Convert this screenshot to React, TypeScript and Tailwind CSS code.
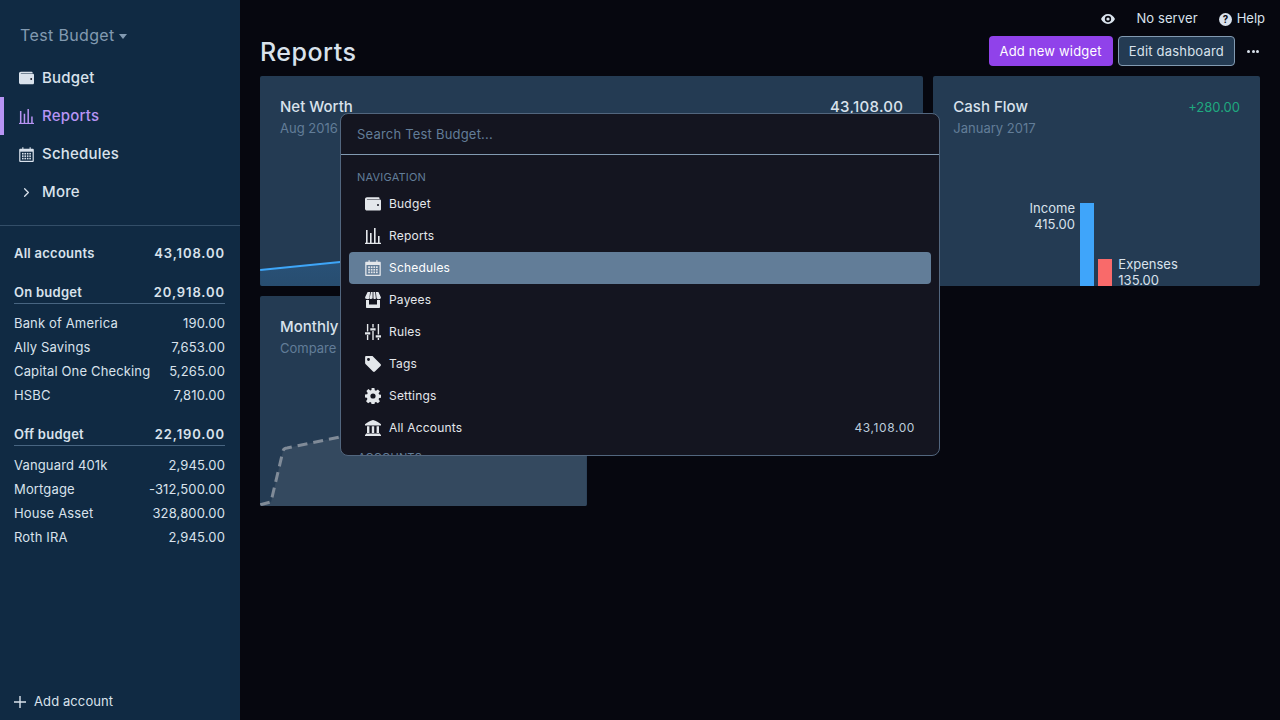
import React from "react";
import { ChevronRight } from "lucide-react";

type IconProps = { className?: string };

const WalletIcon = ({ className }: IconProps) => (
	<svg viewBox="0 0 16 14" className={className} fill="currentColor">
		<path d="M2 .2h11.600c.5 0 .9.3.9.8v1H2.200c-.5 0-.5.4 0 .4H14.600c.8 0 1.400.5 1.400 1.200v8.600c0 .8-.6 1.400-1.400 1.400H2c-1.100 0-2-.8-2-1.900V2.100C0 1 .9.200 2 .200z" />
		<circle cx="13" cy="8" r="1" fill="#14151f" />
	</svg>
);

const ChartIcon = ({ className }: IconProps) => (
	<svg viewBox="0 0 16 16" className={className} fill="currentColor">
		<path d="M0 14.800h16V16H0z" />
		<path d="M1 2h1.600v13H1zM5 5h1.600v10H5zM9 0h1.600v15H9zM13 8h1.600v7H13z" />
	</svg>
);

const CalendarIcon = ({ className, hole }: IconProps & { hole: string }) => (
	<svg viewBox="0 0 16 16" className={className} fill="currentColor">
		<path d="M1.200 1.800H3.500V.2h1.200v1.600h6.600V.2h1.200v1.600h2.300c.6 0 1 .4 1 1V15c0 .6-.4 1-1 1H1.200c-.6 0-1-.4-1-1V2.800c0-.6.4-1 1-1z" />
		<rect x="1.500" y="5" width="13" height="9.700" fill={hole} />
		{[6.300, 8.900, 11.500].map((y) =>
			[3.200, 5.800, 8.400, 11].map((x) => (
				<rect key={`${x}-${y}`} x={x} y={y} width="1.700" height="1.700" fill="currentColor" />
			)),
		)}
	</svg>
);

const StoreIcon = ({ className }: IconProps) => (
	<svg viewBox="0 0 16 16" className={className} fill="currentColor">
		<path d="M2.600 0h2.500l-.7 6.300C3.600 7.500 1 7.500.3 6.300c-.3-.4-.3-.8-.1-1.200zM5.900 0h1.700v6.300c-.5 1-2.500 1-3 .1zM8.400 0h1.700l.8 6.400c-.5.900-2.500.9-2.500-.1zM10.900 0h2.500l2.400 5.100c.2.400.2.800-.1 1.200-.7 1.200-3.300 1.200-4.100 0z" />
		<path fillRule="evenodd" d="M1 8h14v7c0 .6-.4 1-1 1H2c-.6 0-1-.4-1-1zM4 8v4.500h8V8z" />
	</svg>
);

const SlidersIcon = ({ className }: IconProps) => (
	<svg viewBox="0 0 16 16" className={className} fill="currentColor">
		<path d="M1.900 0h1.400v7.600H1.900zM1.900 11h1.400v5H1.900zM7.300 0h1.400v3.500H7.300zM7.300 7h1.400v9H7.300zM12.700 0h1.400v10.600h-1.400zM12.700 14h1.400v2h-1.400z" />
		<path d="M0 8.300h5.300v2.200H0zM5.300 4.200h5.300v2.200H5.300zM10.700 11.300H16v2.200h-5.300z" />
	</svg>
);

const TagIcon = ({ className }: IconProps) => (
	<svg viewBox="0 0 16 16" className={className} fill="currentColor">
		<path
			fillRule="evenodd"
			d="M.1 1.300C.1.600.6.100 1.300.1H7c.4 0 .7.100 1 .4l7.500 7.500c.6.600.6 1.300 0 1.900l-5.600 5.600c-.6.600-1.300.6-1.900 0L.5 8c-.3-.3-.4-.6-.4-1zM3.500 5a1.400 1.400 0 1 0 0-2.900 1.400 1.400 0 0 0 0 2.900z"
		/>
	</svg>
);

const GearIcon = ({ className }: IconProps) => (
	<svg viewBox="0 0 16 16" className={className} fill="currentColor">
		<path
			fillRule="evenodd"
			d="M6.600 0h2.800l.4 2.200 1.200.5 1.900-1.300 2 2-1.300 1.900.5 1.200 2.200.4v2.800l-2.200.4-.5 1.200 1.300 1.900-2 2-1.900-1.300-1.200.5-.4 2.200H6.600l-.4-2.200-1.200-.5-1.900 1.300-2-2L2.400 11.100 1.900 9.800 0 9.400V6.600l2.200-.4.5-1.200L1.400 3.100l2-2 1.900 1.300 1.200-.5zM8 10.600a2.600 2.600 0 1 0 0-5.200 2.600 2.600 0 0 0 0 5.200z"
		/>
	</svg>
);

const BankIcon = ({ className }: IconProps) => (
	<svg viewBox="0 0 16 16" className={className} fill="currentColor">
		<path d="M8 0c3 1 6 2.300 8 4.200v1.300H0V4.200C2 2.300 5 1 8 0z" />
		<path d="M2 6.300h2.400V13H2zM6.800 6.300h2.400V13H6.800zM11.600 6.300H14V13h-2.400zM1 13.500h14v1H1zM0 14.500h16V16H0z" />
	</svg>
);

const navItems = [
	{ label: "Budget", icon: <WalletIcon className="h-[14px] w-[15px]" /> },
	{ label: "Reports", icon: <ChartIcon className="h-[15px] w-[15px]" />, active: true },
	{ label: "Schedules", icon: <CalendarIcon className="h-[15px] w-[15px]" hole="#102a43" /> },
	{ label: "More", icon: <ChevronRight className="h-[15px] w-[15px]" strokeWidth={2} /> },
];

const onBudget = [
	["Bank of America", "190.00"],
	["Ally Savings", "7,653.00"],
	["Capital One Checking", "5,265.00"],
	["HSBC", "7,810.00"],
];

const offBudget = [
	["Vanguard 401k", "2,945.00"],
	["Mortgage", "-312,500.00"],
	["House Asset", "328,800.00"],
	["Roth IRA", "2,945.00"],
];

const paletteItems = [
	{ label: "Budget", icon: <WalletIcon className="h-[14px] w-[16px]" /> },
	{ label: "Reports", icon: <ChartIcon className="h-4 w-4" /> },
	{ label: "Schedules", icon: <CalendarIcon className="h-4 w-4" hole="#627d98" />, selected: true },
	{ label: "Payees", icon: <StoreIcon className="h-4 w-4" /> },
	{ label: "Rules", icon: <SlidersIcon className="h-4 w-4" /> },
	{ label: "Tags", icon: <TagIcon className="h-4 w-4" /> },
	{ label: "Settings", icon: <GearIcon className="h-4 w-4" /> },
	{ label: "All Accounts", icon: <BankIcon className="h-4 w-4" />, value: "43,108.00" },
];

const AccountGroup = ({ title, total, rows }: { title: string; total: string; rows: string[][] }) => (
	<div className="mt-[14px]">
		<div className="mr-[15px] ml-[14px] flex h-[24px] items-center justify-between border-b border-[#486581] pt-[2px] text-[13px] font-semibold tracking-[0.25px] text-[#d9e2ec]">
			<span>{title}</span>
			<span className="tracking-[0.9px]">{total}</span>
		</div>
		<div className="mt-[8px]">
			{rows.map(([name, amount]) => (
				<div key={name} className="flex h-[24px] items-center justify-between pr-[15px] pl-[14px] text-[13px] tracking-[0.15px] text-[#d9e2ec]">
					<span>{name}</span>
					<span>{amount}</span>
				</div>
			))}
		</div>
	</div>
);

const Sidebar = () => (
	<aside className="flex h-full w-[240px] shrink-0 flex-col bg-[#102a43]">
		<div className="flex h-[59px] items-end pb-[12px] pl-[20px] text-[16px] tracking-[0.36px] text-[#829ab1]">
			Test Budget
			<svg viewBox="0 0 8 5" className="mb-[8px] ml-[4px] h-[5px] w-[8px]" fill="currentColor">
				<path d="M0 0h8L4 5z" />
			</svg>
		</div>
		<nav>
			{navItems.map((item) => (
				<div
					key={item.label}
					className={`flex h-[38px] items-center gap-[8px] border-l-4 pl-[15px] text-[15px] font-medium tracking-[0.2px] ${
						item.active ? "border-[#b794f4] text-[#b794f4]" : "border-transparent text-[#d9e2ec]"
					}`}
				>
					<span className="flex w-[15px] justify-center">{item.icon}</span>
					{item.label}
				</div>
			))}
		</nav>
		<div className="mt-[14px] border-t border-[#334e68] pt-[16px]">
			<div className="flex h-[24px] items-center justify-between pr-[15px] pl-[14px] text-[13px] font-semibold tracking-[0.25px] text-[#d9e2ec]">
				<span>All accounts</span>
				<span className="tracking-[0.9px]">43,108.00</span>
			</div>
			<AccountGroup title="On budget" total="20,918.00" rows={onBudget} />
			<AccountGroup title="Off budget" total="22,190.00" rows={offBudget} />
		</div>
		<div className="mt-auto flex h-[38px] items-center gap-[8px] pt-[2px] pl-[14px] text-[13px] tracking-[0.1px] text-[#d9e2ec]">
			<svg viewBox="0 0 12 12" className="h-[12px] w-[12px]" fill="none" stroke="currentColor" strokeWidth="1.400">
				<path d="M6 0v12M0 6h12" />
			</svg>
			Add account
		</div>
	</aside>
);

const Card = ({ className, children }: { className?: string; children: React.ReactNode }) => (
	<div className={`relative h-[210px] overflow-hidden rounded-[2px] bg-[#243b53] ${className ?? ""}`}>{children}</div>
);

const Dashboard = () => (
	<main className="relative flex min-w-0 flex-1 flex-col bg-[#06070f] px-[20px]">
		<div className="-mr-[5px] flex h-[36px] items-center justify-end gap-[21px] pt-[2px] text-[13px] text-[#d9e2ec]">
			<svg viewBox="0 0 20 14" className="h-[10px] w-[14px]" fill="#d9e2ec">
				<path fillRule="evenodd" d="M10 0c4.500 0 8 3 10 7-2 4-5.500 7-10 7S2 11 0 7c2-4 5.500-7 10-7zm0 11.500a4.500 4.500 0 1 0 0-9 4.500 4.500 0 0 0 0 9z" />
				<circle cx="10" cy="7" r="2.300" />
			</svg>
			<span className="tracking-[0.1px]">No server</span>
			<span className="flex items-center gap-[5px]">
				<svg viewBox="0 0 16 16" className="h-[13px] w-[13px]" fill="#d9e2ec">
					<circle cx="8" cy="8" r="8" />
					<text x="8" y="12.500" textAnchor="middle" fontSize="12" fontWeight="700" fill="#06070f">?</text>
				</svg>
				Help
			</span>
		</div>
		<div className="flex h-[40px] items-start justify-between">
			<h1 className="text-[25px] leading-[32px] font-medium tracking-[0.5px] text-[#d9e2ec]">Reports</h1>
			<div className="flex items-center gap-[5px] text-[13px] tracking-[0.2px]">
				<button className="h-[30px] rounded-[4px] bg-[#9042ea] px-[11px] pt-px text-white">Add new widget</button>
				<button className="h-[30px] rounded-[4px] border border-[#829ab1] bg-[#243b53] px-[10px] pt-px text-[#d9e2ec]">Edit dashboard</button>
				<span className="mr-[1px] ml-[7px] flex gap-[1.500px]">
					<i className="h-[3px] w-[3px] rounded-full bg-[#d9e2ec]" />
					<i className="h-[3px] w-[3px] rounded-full bg-[#d9e2ec]" />
					<i className="h-[3px] w-[3px] rounded-full bg-[#d9e2ec]" />
				</span>
			</div>
		</div>
		<div className="grid grid-cols-3 gap-[10px]">
			<Card className="col-span-2">
				<div className="flex items-center justify-between px-[20px] pt-[20px] text-[15px] font-medium text-[#d9e2ec]">
					<span>Net Worth</span>
					<span className="tracking-[0.3px]">43,108.00</span>
				</div>
				<div className="px-[20px] text-[13px] text-[#627d98]">Aug 2016 - Jan 2017</div>
				<svg viewBox="0 0 663 210" className="absolute inset-0 h-full w-full">
					<defs>
						<linearGradient id="netFill" x1="0" y1="0" x2="0" y2="1">
							<stop offset="0" stopColor="#2f6ea5" stopOpacity="0.6" />
							<stop offset="1" stopColor="#2f6ea5" stopOpacity="0.35" />
						</linearGradient>
					</defs>
					<path d="M0 194L90 185L663 140V210H0z" fill="url(#netFill)" />
					<path d="M0 194L90 185L663 140" fill="none" stroke="#3ea6f8" strokeWidth="2" />
				</svg>
			</Card>
			<Card>
				<div className="flex items-center justify-between px-[20px] pt-[20px] text-[15px] font-medium text-[#d9e2ec]">
					<span>Cash Flow</span>
					<span className="text-[13px] font-normal text-[#1fa87f]">+280.00</span>
				</div>
				<div className="px-[20px] text-[13px] text-[#627d98]">January 2017</div>
				<div className="absolute bottom-0 left-[147px] h-[83px] w-[14px] bg-[#3fa5fa]" />
				<div className="absolute bottom-0 left-[165px] h-[27px] w-[14px] bg-[#f96a6a]" />
				<div className="absolute top-[124px] right-[185px] text-right text-[13px] leading-[16px] text-[#d9e2ec]">
					Income
					<br />
					415.00
				</div>
				<div className="absolute top-[180px] left-[185px] text-[13px] leading-[16px] text-[#d9e2ec]">
					Expenses
					<br />
					135.00
				</div>
			</Card>
			<Card>
				<div className="px-[20px] pt-[20px] text-[15px] font-medium text-[#d9e2ec]">Monthly Spending</div>
				<div className="px-[20px] text-[13px] text-[#627d98]">Compare this month</div>
				<svg viewBox="0 0 327 210" className="absolute inset-0 h-full w-full">
					<path d="M0 209L11 206L23 155Q24 152 27 152L80 141L327 100V210H0z" fill="#34495f" />
					<path d="M0 209L11 206L23 155Q24 152 27 152L80 141L327 100" fill="none" stroke="#808b98" strokeWidth="3" strokeDasharray="10 6" />
				</svg>
			</Card>
		</div>
	</main>
);

const CommandPalette = () => (
	<div className="absolute top-[113px] left-[340px] h-[343px] w-[600px] overflow-hidden rounded-[8px] border border-[#52667e] bg-[#141520]">
		<div className="flex h-[41px] items-center border-b border-[#829ab1] px-[16px] pt-[2px] text-[13px] tracking-[0.2px] text-[#627d98]">Search Test Budget...</div>
		<div className="px-[8px] pt-[14px]">
			<div className="pl-[8px] text-[11px] leading-[16px] tracking-[0.2px] text-[#627d98]">NAVIGATION</div>
			<div className="mt-[3px]">
				{paletteItems.map((item) => (
					<div
						key={item.label}
						className={`flex h-[32px] items-center rounded-[4px] px-[16px] text-[12px] tracking-[0.2px] text-[#e4e7eb] ${
							item.selected ? "bg-[#627d98] text-white" : ""
						}`}
					>
						<span className="mr-[8px] flex w-[16px] justify-center text-[#e4e7eb]">{item.icon}</span>
						<span className="flex-1">{item.label}</span>
						{item.value && <span className="tracking-[0.6px] text-[#bcccdc]">{item.value}</span>}
					</div>
				))}
			</div>
			<div className="mt-[5px] pl-[9px] text-[11px] leading-[16px] tracking-[0.2px] text-[#627d98]">ACCOUNTS</div>
		</div>
	</div>
);

export default function App() {
	return (
		<div className="relative flex h-[720px] w-[1280px] overflow-hidden font-['Inter',sans-serif]">
			<Sidebar />
			<Dashboard />
			<CommandPalette />
		</div>
	);
}
